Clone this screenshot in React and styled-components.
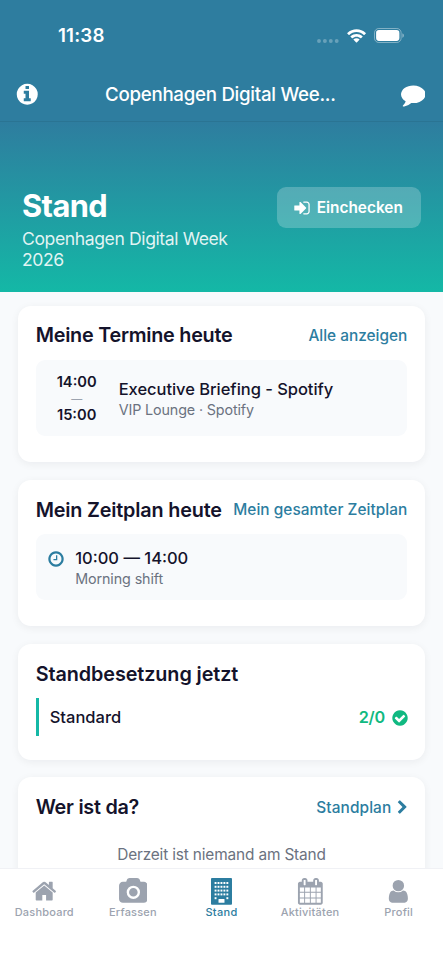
import React from 'react';
import styled, { createGlobalStyle } from 'styled-components';

const GlobalStyle = createGlobalStyle`
  * {
    box-sizing: border-box;
  }
  body {
    margin: 0;
    background: #f8fafc;
    font-family: Inter, "Liberation Sans", sans-serif;
    color: #14132b;
    -webkit-font-smoothing: antialiased;
  }
`;

const Screen = styled.div`
  width: 443px;
  height: 960px;
  display: flex;
  flex-direction: column;
  overflow: hidden;
  background: #f8fafc;
`;

const Text = styled.span`
  white-space: nowrap;
  font-size: ${(p) => p.$size}px;
  line-height: ${(p) => p.$line}px;
  font-weight: ${(p) => p.$weight || 400};
  letter-spacing: ${(p) => p.$spacing || 0}px;
  color: ${(p) => p.$color || 'inherit'};
`;

const CardTitle = styled.h2`
  margin: 0;
  white-space: nowrap;
  font-size: 19.8px;
  line-height: 26px;
  font-weight: 600;
  letter-spacing: ${(p) => p.$spacing || 0}px;
`;

const StatusBar = styled.div`
  height: 71px;
  flex: none;
  display: flex;
  justify-content: space-between;
  align-items: center;
  padding: 0 39px 0 58px;
  color: #fff;
  background: #2e7d9f;
`;

const StatusIcons = styled.div`
  display: flex;
  align-items: center;
  gap: 8px;
`;

const Header = styled.div`
  height: 51px;
  flex: none;
  display: flex;
  align-items: center;
  justify-content: space-between;
  padding: 0 17.5px 3px 15.2px;
  color: #fff;
  background: #2e7d9f;
  border-bottom: 1px solid #2a7493;
`;

const Hero = styled.div`
  height: 170px;
  flex: none;
  display: flex;
  justify-content: space-between;
  align-items: flex-start;
  padding: 64.5px 22px 0;
  color: #fff;
  background: linear-gradient(180deg, #2e7d9f 0%, #14b8a6 100%);
`;

const HeroText = styled.div`
  display: flex;
  flex-direction: column;
  gap: 4px;
`;

const CheckinButton = styled.button`
  width: 144px;
  height: 41px;
  display: flex;
  align-items: center;
  justify-content: center;
  gap: 5.5px;
  padding: 1px 2px 0 0;
  border: 0;
  border-radius: 9px;
  font-family: inherit;
  color: #fff;
  background: rgba(255, 255, 255, 0.22);
`;

const Content = styled.div`
  flex: 1;
  min-height: 0;
  display: flex;
  flex-direction: column;
  gap: 17.5px;
  padding: 13.5px 17.7px 0;
  overflow: hidden;
`;

const Card = styled.section`
  height: ${(p) => p.$height}px;
  flex: none;
  padding: ${(p) => p.$top || 17}px 18px 0;
  border-radius: 13px;
  background: #fff;
  box-shadow: 0 2px 9px rgba(15, 23, 42, 0.06);
`;

const CardHeader = styled.div`
  height: 26px;
  display: flex;
  justify-content: space-between;
  align-items: center;
  margin-bottom: 11.7px;
`;

const CardLink = styled.div`
  display: flex;
  align-items: center;
  gap: 4px;
  padding-top: 1px;
  margin-right: ${(p) => (p.$arrow ? -3 : 0)}px;
  color: #2c7da0;
`;

const ItemBox = styled.div`
  height: ${(p) => p.$height}px;
  display: flex;
  padding: ${(p) => p.$padding};
  border-radius: 9px;
  background: #f8fafc;
`;

const TimeColumn = styled.div`
  width: 57px;
  display: flex;
  flex-direction: column;
  align-items: center;
  margin-right: 13.5px;
`;

const ItemText = styled.div`
  display: flex;
  flex-direction: column;
  padding-top: ${(p) => p.$top || 0}px;
`;

const ClockWrap = styled.div`
  margin: 2.2px 10px 0 0;
  color: #2c7da0;
`;

const StaffRow = styled.div`
  height: 37.5px;
  display: flex;
  justify-content: space-between;
  align-items: center;
  padding: 1px 0 0 11px;
  border-left: 3.5px solid #14b8a6;
`;

const StaffCount = styled.div`
  display: flex;
  align-items: center;
  gap: 5.5px;
  margin-right: -1.2px;
  color: #10b981;
`;

const EmptyText = styled.div`
  display: flex;
  justify-content: center;
  padding-top: 11.5px;
`;

const TabBar = styled.nav`
  height: 92px;
  flex: none;
  display: grid;
  grid-template-columns: repeat(5, 1fr);
  background: #fff;
  border-top: 1px solid #f0f1f5;
`;

const Tab = styled.div`
  display: flex;
  flex-direction: column;
  align-items: center;
  gap: 0.8px;
  padding-top: 8.9px;
  color: ${(p) => (p.$active ? '#2c7da0' : '#9ca3af')};
`;

const Svg = styled.svg`
  display: block;
  flex: none;
  fill: currentColor;
`;

const Dots = styled(Svg)`
  margin-top: 10px;
  opacity: 0.28;
`;

const ICONS = {
  info: 'M1152 1376v-160q0-14-9-23t-23-9h-96v-512q0-14-9-23t-23-9h-320q-14 0-23 9t-9 23v160q0 14 9 23t23 9h96v320h-96q-14 0-23 9t-9 23v160q0 14 9 23t23 9h448q14 0 23-9t9-23zm-128-896v-160q0-14-9-23t-23-9h-192q-14 0-23 9t-9 23v160q0 14 9 23t23 9h192q14 0 23-9t9-23zm640 416q0 209-103 385.5t-279.5 279.5-385.5 103-385.5-103-279.5-279.5-103-385.5 103-385.5 279.5-279.5 385.5-103 385.5 103 279.5 279.5 103 385.5z',
  comment: 'M1792 896q0 174-120 321.5t-326 233-450 85.5q-70 0-145-8-198 175-460 242-49 14-114 22-17 2-30.5-9t-17.5-29v-1q-3-4-.5-12t2-10 4.5-9.5l6-9 7-8.5 8-9q7-8 31-34.5t34.5-38 31-39.5 32.5-51 27-59 26-76q-157-89-247.5-220t-90.5-281q0-130 71-248.5t191-204.5 286-136.5 348-50.5q244 0 450 85.5t326 233 120 321.5z',
  signIn: 'M1312 896q0 26-19 45l-544 544q-19 19-45 19t-45-19-19-45v-288h-448q-26 0-45-19t-19-45v-384q0-26 19-45t45-19h448v-288q0-26 19-45t45-19 45 19l544 544q19 19 19 45zm352-352v704q0 119-84.5 203.5t-203.5 84.5h-320q-13 0-22.5-9.5t-9.5-22.5q0-4-1-20t-.5-26.5 3-23.5 10-19.5 20.5-6.5h320q66 0 113-47t47-113v-704q0-66-47-113t-113-47h-312l-11.5-1-11.5-3-8-5.5-7-9-2-13.5q0-4-1-20t-.5-26.5 3-23.5 10-19.5 20.5-6.5h320q119 0 203.5 84.5t84.5 203.5z',
  clock: 'M1024 544v448q0 14-9 23t-23 9h-320q-14 0-23-9t-9-23v-64q0-14 9-23t23-9h224v-352q0-14 9-23t23-9h64q14 0 23 9t9 23zm416 352q0-148-73-273t-198-198-273-73-273 73-198 198-73 273 73 273 198 198 273 73 273-73 198-198 73-273zm224 0q0 209-103 385.5t-279.5 279.5-385.5 103-385.5-103-279.5-279.5-103-385.5 103-385.5 279.5-279.5 385.5-103 385.5 103 279.5 279.5 103 385.5z',
  check: 'M1412 734q0-28-18-46l-91-90q-19-19-45-19t-45 19l-408 407-226-226q-19-19-45-19t-45 19l-91 90q-18 18-18 46 0 27 18 45l362 362q19 19 45 19 27 0 46-19l543-543q18-18 18-45zm252 162q0 209-103 385.5t-279.5 279.5-385.5 103-385.5-103-279.5-279.5-103-385.5 103-385.5 279.5-279.5 385.5-103 385.5 103 279.5 279.5 103 385.5z',
  chevron: 'M1363 877l-742 742q-19 19-45 19t-45-19l-166-166q-19-19-19-45t19-45l531-531-531-531q-19-19-19-45t19-45l166-166q19-19 45-19t45 19l742 742q19 19 19 45t-19 45z',
  home: 'M1472 992v480q0 26-19 45t-45 19h-384v-384h-256v384h-384q-26 0-45-19t-19-45v-480q0-1 .5-3t.5-3l575-474 575 474q1 2 1 6zm223-69l-62 74q-8 9-21 11h-3q-13 0-21-7l-692-577-692 577q-12 8-24 7-13-2-21-11l-62-74q-8-10-7-23.5t11-21.5l719-599q32-26 76-26t76 26l244 204v-195q0-14 9-23t23-9h192q14 0 23 9t9 23v408l219 182q10 8 11 21.5t-7 23.5z',
  camera: 'M896 672q119 0 203.5 84.5t84.5 203.5-84.5 203.5-203.5 84.5-203.5-84.5-84.5-203.5 84.5-203.5 203.5-84.5zm704-416q106 0 181 75t75 181v896q0 106-75 181t-181 75h-1408q-106 0-181-75t-75-181v-896q0-106 75-181t181-75h224l51-136q19-49 69.5-84.5t103.5-35.5h512q53 0 103.5 35.5t69.5 84.5l51 136h224zm-704 1152q185 0 316.5-131.5t131.5-316.5-131.5-316.5-316.5-131.5-316.5 131.5-131.5 316.5 131.5 316.5 316.5 131.5z',
  calendar: 'M192 1664h288v-288h-288v288zm352 0h320v-288h-320v288zm-352-352h288v-320h-288v320zm352 0h320v-320h-320v320zm-352-384h288v-288h-288v288zm736 736h320v-288h-320v288zm-384-736h320v-288h-320v288zm768 736h288v-288h-288v288zm-384-352h320v-320h-320v320zm-352-864v-288q0-13-9.5-22.5t-22.5-9.5h-64q-13 0-22.5 9.5t-9.5 22.5v288q0 13 9.5 22.5t22.5 9.5h64q13 0 22.5-9.5t9.5-22.5zm736 864h288v-320h-288v320zm-384-384h320v-288h-320v288zm384 0h288v-288h-288v288zm32-480v-288q0-13-9.5-22.5t-22.5-9.5h-64q-13 0-22.5 9.5t-9.5 22.5v288q0 13 9.5 22.5t22.5 9.5h64q13 0 22.5-9.5t9.5-22.5zm384-64v1280q0 52-38 90t-90 38h-1408q-52 0-90-38t-38-90v-1280q0-52 38-90t90-38h128v-96q0-66 47-113t113-47h64q66 0 113 47t47 113v96h384v-96q0-66 47-113t113-47h64q66 0 113 47t47 113v96h128q52 0 90 38t38 90z',
  user: 'M1536 1399q0 109-62.5 187t-150.5 78h-854q-88 0-150.5-78t-62.5-187q0-85 8.5-160.5t31.5-152 58.5-131 94-89 134.5-34.5q131 128 313 128t313-128q76 0 134.5 34.5t94 89 58.5 131 31.5 152 8.5 160.5zm-256-887q0 159-112.5 271.5t-271.5 112.5-271.5-112.5-112.5-271.5 112.5-271.5 271.5-112.5 271.5 112.5 112.5 271.5z',
};

const Icon = ({ name, size, box = '0 0 1792 1792', width }) => (
  <Svg width={width || size} height={size} viewBox={box}>
    <path d={ICONS[name]} />
  </Svg>
);

const BuildingIcon = () => {
  const windows = [];
  for (let row = 0; row < 5; row++) {
    for (let col = 0; col < 5; col++) {
      if (row === 4 && col > 0 && col < 4) continue;
      windows.push(<rect key={`${row}-${col}`} x={3.6 + col * 2.95} y={4 + row * 3.8} width="1.9" height="2" fill="#fff" />);
    }
  }
  return (
    <Svg width="21" height="26.7" viewBox="0 0 21 26.7">
      <rect width="21" height="26.7" rx="0.9" />
      {windows}
      <rect x="7.5" y="20.9" width="6" height="3.9" rx="0.4" fill="#fff" />
    </Svg>
  );
};

const SignalDots = () => (
  <Dots width="22" height="4" viewBox="0 0 22 4">
    <circle cx="2" cy="2" r="1.95" />
    <circle cx="7.9" cy="2" r="1.95" />
    <circle cx="13.8" cy="2" r="1.95" />
    <circle cx="19.7" cy="2" r="1.95" />
  </Dots>
);

const WifiIcon = () => (
  <Svg width="19" height="14" viewBox="0 0 17 12.3">
    <path d="M8.5 2.6c2.5 0 4.8.9 6.6 2.6.1.1.3.1.4 0l1.3-1.3c.2-.1.2-.4 0-.5C12.2-1 4.9-1 .3 3.4c-.2.1-.2.4 0 .5l1.3 1.3c.1.1.3.1.4 0C3.7 3.5 6.1 2.6 8.5 2.6z" />
    <path d="M8.5 6.8c1.4 0 2.7.5 3.7 1.4.1.1.3.1.4 0l1.3-1.3c.2-.1.2-.4 0-.5-3-2.8-7.7-2.8-10.7 0-.2.1-.2.4 0 .5l1.3 1.3c.1.1.3.1.4 0 1-.9 2.2-1.4 3.6-1.4z" />
    <path d="M11.1 9.6c.1-.2.1-.4 0-.5-1.5-1.3-3.7-1.3-5.2 0-.2.1-.2.3 0 .5l2.3 2.3c.2.2.4.2.6 0z" />
  </Svg>
);

const BatteryIcon = () => (
  <Svg width="30" height="15" viewBox="0 0 30 15">
    <rect x="0.5" y="0.5" width="26.6" height="14" rx="4.3" fill="none" stroke="#fff" strokeOpacity="0.4" />
    <rect x="2.1" y="2.1" width="23.3" height="10.8" rx="2.8" />
    <path d="M28.4 5.2v4.6c.9-.4 1.5-1.3 1.5-2.3s-.6-1.9-1.5-2.3z" opacity="0.45" />
  </Svg>
);

const TABS = [
  { label: 'Dashboard', spacing: 0.2, icon: <Icon name="home" size={26.4} /> },
  { label: 'Erfassen', spacing: 0.2, icon: <Icon name="camera" size={26.7} width={28.7} box="-64 0 1920 1792" /> },
  { label: 'Stand', spacing: 0.3, icon: <BuildingIcon />, active: true },
  { label: 'Aktivitäten', spacing: 0.22, icon: <Icon name="calendar" size={26.7} /> },
  { label: 'Profil', spacing: 0.2, icon: <Icon name="user" size={26.7} /> },
];

const App = () => {
  return (
    <Screen>
      <GlobalStyle />
      <StatusBar>
        <Text $size={18.8} $line={25} $weight={600} $spacing={0.15}>11:38</Text>
        <StatusIcons>
          <SignalDots />
          <WifiIcon />
          <BatteryIcon />
        </StatusIcons>
      </StatusBar>
      <Header>
        <Icon name="info" size={24.5} />
        <Text $size={18.7} $line={24} $weight={500} $spacing={-0.27}>Copenhagen Digital Wee...</Text>
        <Icon name="comment" size={24.6} />
      </Header>
      <Hero>
        <HeroText>
          <Text $size={30.8} $line={37} $weight={700} $spacing={-0.6}>Stand</Text>
          <Text $size={17.6} $line={21} $spacing={-0.41} $color="rgba(255,255,255,0.88)">
            Copenhagen Digital Week<br />2026
          </Text>
        </HeroText>
        <CheckinButton>
          <Icon name="signIn" size={18} />
          <Text $size={15.4} $line={20} $weight={600}>Einchecken</Text>
        </CheckinButton>
      </Hero>
      <Content>
        <Card $height={156.7} $top={16.7}>
          <CardHeader>
            <CardTitle $spacing={-0.24}>Meine Termine heute</CardTitle>
            <CardLink>
              <Text $size={15.4} $line={20} $weight={500}>Alle anzeigen</Text>
            </CardLink>
          </CardHeader>
          <ItemBox $height={75.7} $padding="12.7px 12.5px">
            <TimeColumn>
              <Text $size={14.7} $line={19} $weight={600}>14:00</Text>
              <Text $size={11} $line={14} $color="#9ca3af">—</Text>
              <Text $size={14.7} $line={19} $weight={600}>15:00</Text>
            </TimeColumn>
            <ItemText $top={6}>
              <Text $size={16.5} $line={21} $weight={500} $spacing={-0.04}>Executive Briefing - Spotify</Text>
              <Text $size={14.3} $line={20} $spacing={-0.12} $color="#6b7280">VIP Lounge · Spotify</Text>
            </ItemText>
          </ItemBox>
        </Card>
        <Card $height={146.5}>
          <CardHeader>
            <CardTitle $spacing={-0.17}>Mein Zeitplan heute</CardTitle>
            <CardLink>
              <Text $size={15.4} $line={20} $weight={500} $spacing={0.04}>Mein gesamter Zeitplan</Text>
            </CardLink>
          </CardHeader>
          <ItemBox $height={65.5} $padding="13px 11.5px">
            <ClockWrap>
              <Icon name="clock" size={18} />
            </ClockWrap>
            <ItemText $top={0.5}>
              <Text $size={16.5} $line={21} $weight={500}>10:00 — 14:00</Text>
              <Text $size={14.3} $line={20} $spacing={-0.1} $color="#6b7280">Morning shift</Text>
            </ItemText>
          </ItemBox>
        </Card>
        <Card $height={116}>
          <CardHeader>
            <CardTitle $spacing={-0.08}>Standbesetzung jetzt</CardTitle>
          </CardHeader>
          <StaffRow>
            <Text $size={16.5} $line={21} $weight={500}>Standard</Text>
            <StaffCount>
              <Text $size={16.2} $line={21} $weight={600} $spacing={-0.2}>2/0</Text>
              <Icon name="check" size={18} />
            </StaffCount>
          </StaffRow>
        </Card>
        <Card $height={150}>
          <CardHeader>
            <CardTitle $spacing={-0.25}>Wer ist da?</CardTitle>
            <CardLink $arrow>
              <Text $size={15.4} $line={20} $weight={500} $spacing={0.1}>Standplan</Text>
              <Icon name="chevron" size={15} />
            </CardLink>
          </CardHeader>
          <EmptyText>
            <Text $size={15.4} $line={24} $spacing={-0.15} $color="#6b7280">Derzeit ist niemand am Stand</Text>
          </EmptyText>
        </Card>
      </Content>
      <TabBar>
        {TABS.map((tab) => (
          <Tab key={tab.label} $active={tab.active}>
            {tab.icon}
            <Text $size={11} $line={14} $weight={500} $spacing={tab.spacing}>{tab.label}</Text>
          </Tab>
        ))}
      </TabBar>
    </Screen>
  );
};

export default App;
